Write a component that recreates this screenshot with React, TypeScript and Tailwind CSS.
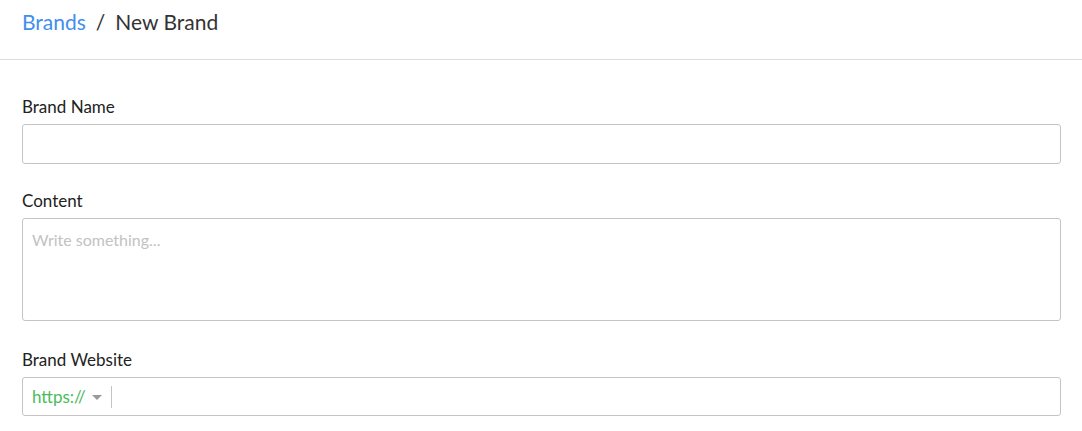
export default function App() {
  return (
    <div className="min-h-screen bg-white text-[#333333]" style={{ fontFamily: "Lato, 'Open Sans', sans-serif" }}>
      <div className="h-[60px] border-b border-[#dddddd] pl-[22px] pr-[21px] pt-[7px]">
        <div className="flex items-center text-[21px] leading-[30px]">
          <a className="text-[#3f8ef0]">Brands</a>
          <span className="mx-[10px] text-[#333333]">/</span>
          <span className="text-[#333333]">New Brand</span>
        </div>
      </div>

      <form className="pl-[22px] pr-[21px] pt-[35px]">
        <div className="mb-[25px]">
          <label className="mb-[5px] block text-[17px] leading-[24px] text-[#222222]">Brand Name</label>
          <input
            type="text"
            className="h-[40px] w-full rounded-[3px] border border-[#c4c4c4] px-[10px] text-[16px] outline-none"
          />
        </div>

        <div className="mb-[27px]">
          <label className="mb-[5px] block text-[17px] leading-[24px] text-[#222222]">Content</label>
          <textarea
            placeholder="Write something..."
            className="block h-[103px] w-full resize-none rounded-[3px] border border-[#c4c4c4] px-[9px] py-[10px] text-[16px] leading-[22px] outline-none placeholder:text-[#c2c2c2]"
          />
        </div>

        <div>
          <label className="mb-[5px] block text-[17px] leading-[24px] text-[#222222]">Brand Website</label>
          <div className="flex h-[39px] w-full items-center rounded-[3px] border border-[#c4c4c4] pl-[9px]">
            <span className="text-[17px] text-[#4cbb5e]">https://</span>
            <svg width="10" height="6" viewBox="0 0 10 6" className="ml-[6px] mt-[2px]">
              <path d="M0 0 L10 0 L5 5 Z" fill="#9a9a9a" />
            </svg>
            <span className="ml-[9px] h-[22px] w-px bg-[#c4c4c4]" />
            <input type="text" className="h-full flex-1 px-[8px] text-[16px] outline-none" />
          </div>
        </div>
      </form>
    </div>
  );
}
